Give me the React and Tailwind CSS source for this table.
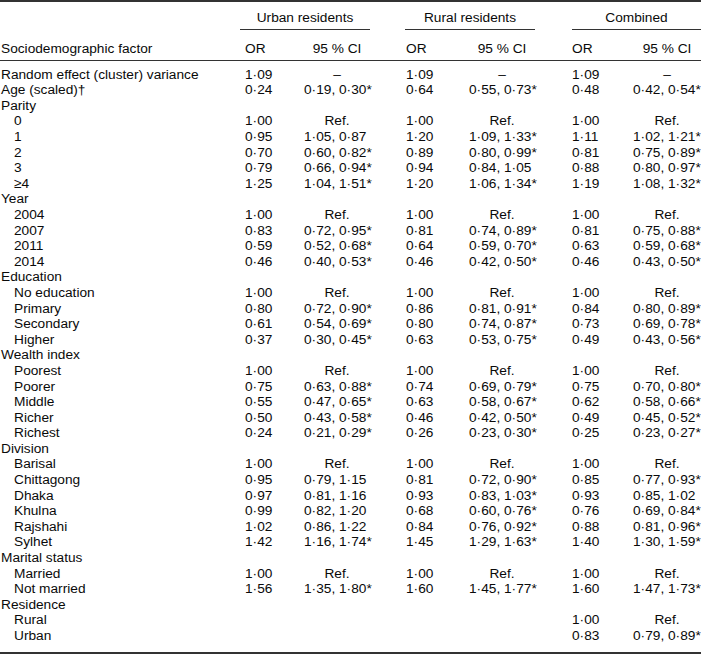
import React from "react";

const rows = [
  ["Random effect (cluster) variance", 0, "1·09", "–", "1·09", "–", "1·09", "–"],
  ["Age (scaled)†", 0, "0·24", "0·19, 0·30*", "0·64", "0·55, 0·73*", "0·48", "0·42, 0·54*"],
  ["Parity", 0],
  ["0", 1, "1·00", "Ref.", "1·00", "Ref.", "1·00", "Ref."],
  ["1", 1, "0·95", "1·05, 0·87", "1·20", "1·09, 1·33*", "1·11", "1·02, 1·21*"],
  ["2", 1, "0·70", "0·60, 0·82*", "0·89", "0·80, 0·99*", "0·81", "0·75, 0·89*"],
  ["3", 1, "0·79", "0·66, 0·94*", "0·94", "0·84, 1·05", "0·88", "0·80, 0·97*"],
  ["≥4", 1, "1·25", "1·04, 1·51*", "1·20", "1·06, 1·34*", "1·19", "1·08, 1·32*"],
  ["Year", 0],
  ["2004", 1, "1·00", "Ref.", "1·00", "Ref.", "1·00", "Ref."],
  ["2007", 1, "0·83", "0·72, 0·95*", "0·81", "0·74, 0·89*", "0·81", "0·75, 0·88*"],
  ["2011", 1, "0·59", "0·52, 0·68*", "0·64", "0·59, 0·70*", "0·63", "0·59, 0·68*"],
  ["2014", 1, "0·46", "0·40, 0·53*", "0·46", "0·42, 0·50*", "0·46", "0·43, 0·50*"],
  ["Education", 0],
  ["No education", 1, "1·00", "Ref.", "1·00", "Ref.", "1·00", "Ref."],
  ["Primary", 1, "0·80", "0·72, 0·90*", "0·86", "0·81, 0·91*", "0·84", "0·80, 0·89*"],
  ["Secondary", 1, "0·61", "0·54, 0·69*", "0·80", "0·74, 0·87*", "0·73", "0·69, 0·78*"],
  ["Higher", 1, "0·37", "0·30, 0·45*", "0·63", "0·53, 0·75*", "0·49", "0·43, 0·56*"],
  ["Wealth index", 0],
  ["Poorest", 1, "1·00", "Ref.", "1·00", "Ref.", "1·00", "Ref."],
  ["Poorer", 1, "0·75", "0·63, 0·88*", "0·74", "0·69, 0·79*", "0·75", "0·70, 0·80*"],
  ["Middle", 1, "0·55", "0·47, 0·65*", "0·63", "0·58, 0·67*", "0·62", "0·58, 0·66*"],
  ["Richer", 1, "0·50", "0·43, 0·58*", "0·46", "0·42, 0·50*", "0·49", "0·45, 0·52*"],
  ["Richest", 1, "0·24", "0·21, 0·29*", "0·26", "0·23, 0·30*", "0·25", "0·23, 0·27*"],
  ["Division", 0],
  ["Barisal", 1, "1·00", "Ref.", "1·00", "Ref.", "1·00", "Ref."],
  ["Chittagong", 1, "0·95", "0·79, 1·15", "0·81", "0·72, 0·90*", "0·85", "0·77, 0·93*"],
  ["Dhaka", 1, "0·97", "0·81, 1·16", "0·93", "0·83, 1·03*", "0·93", "0·85, 1·02"],
  ["Khulna", 1, "0·99", "0·82, 1·20", "0·68", "0·60, 0·76*", "0·76", "0·69, 0·84*"],
  ["Rajshahi", 1, "1·02", "0·86, 1·22", "0·84", "0·76, 0·92*", "0·88", "0·81, 0·96*"],
  ["Sylhet", 1, "1·42", "1·16, 1·74*", "1·45", "1·29, 1·63*", "1·40", "1·30, 1·59*"],
  ["Marital status", 0],
  ["Married", 1, "1·00", "Ref.", "1·00", "Ref.", "1·00", "Ref."],
  ["Not married", 1, "1·56", "1·35, 1·80*", "1·60", "1·45, 1·77*", "1·60", "1·47, 1·73*"],
  ["Residence", 0],
  ["Rural", 1, "", "", "", "", "1·00", "Ref."],
  ["Urban", 1, "", "", "", "", "0·83", "0·79, 0·89*"],
];

const cols = "grid grid-cols-[240px_64px_66px_35px_64px_66px_37px_61px_68px]";

function CI({ value }) {
  const centered = value === "Ref." || value === "–";
  return <div className={centered ? "text-center" : ""}>{value}</div>;
}

export default function App() {
  return (
    <div
      className="w-[701px] h-[654px] bg-white text-[13.7px] leading-[15.6px] text-[#0a0a0a] whitespace-nowrap"
      style={{ fontFamily: '"Liberation Sans", Arial, sans-serif' }}
    >
      <div className="border-t-2 border-b-2 border-[#333]">
        {/* group headings */}
        <div className={`${cols} pt-[7.7px]`}>
          <div />
          <div className="col-span-2 text-center pb-[3.7px] border-b border-[#333]">Urban residents</div>
          <div />
          <div className="col-span-2 text-center pb-[3.7px] border-b border-[#333]">Rural residents</div>
          <div />
          <div className="col-span-2 text-center pb-[3.7px] border-b border-[#333]">Combined</div>
        </div>
        {/* column headings */}
        <div className={`${cols} pt-[10.7px] pb-[3.7px] border-b border-[#333]`}>
          <div className="pl-px">Sociodemographic factor</div>
          <div className="pl-[5px]">OR</div>
          <div className="text-center">95 % CI</div>
          <div />
          <div className="pl-px">OR</div>
          <div className="text-center">95 % CI</div>
          <div />
          <div>OR</div>
          <div className="text-center">95 % CI</div>
        </div>
        <div className="pt-[5.7px] pb-[8px]">
          {rows.map(([label, indent, uo, uc, ro, rc, co, cc]) => (
            <div key={label + uo + co} className={`${cols} h-[15.6px]`}>
              <div className={indent ? "pl-[14px]" : "pl-px"}>{label}</div>
              <div className="pl-[5px]">{uo}</div>
              <CI value={uc} />
              <div />
              <div className="pl-px">{ro}</div>
              <CI value={rc} />
              <div />
              <div>{co}</div>
              <CI value={cc} />
            </div>
          ))}
        </div>
      </div>
    </div>
  );
}
